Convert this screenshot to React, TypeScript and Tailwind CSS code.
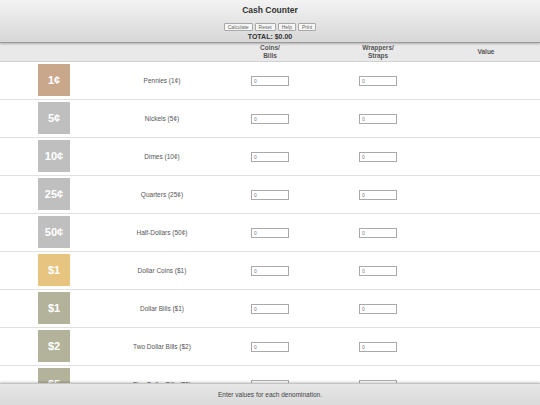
import { useState } from "react";

interface Denomination {
  badge: string;
  label: string;
  color: string;
}

const denominations: Denomination[] = [
  { badge: "1¢", label: "Pennies (1¢)", color: "bg-[#c9a78b]" },
  { badge: "5¢", label: "Nickels (5¢)", color: "bg-[#bfbfbf]" },
  { badge: "10¢", label: "Dimes (10¢)", color: "bg-[#bfbfbf]" },
  { badge: "25¢", label: "Quarters (25¢)", color: "bg-[#bfbfbf]" },
  { badge: "50¢", label: "Half-Dollars (50¢)", color: "bg-[#bfbfbf]" },
  { badge: "$1", label: "Dollar Coins ($1)", color: "bg-[#e7c47f]" },
  { badge: "$1", label: "Dollar Bills ($1)", color: "bg-[#b3b39b]" },
  { badge: "$2", label: "Two Dollar Bills ($2)", color: "bg-[#b3b39b]" },
  { badge: "$5", label: "Five Dollar Bills ($5)", color: "bg-[#b3b39b]" },
];

function SmallButton({ children }: { children: string }) {
  return (
    <button className="h-[8px] px-[3px] border border-[#a8a8a8] bg-[#f6f6f6] text-[5px] leading-[6px] text-[#666] rounded-[1px]">
      {children}
    </button>
  );
}

function CountInput() {
  const [value, setValue] = useState("0");
  return (
    <input
      value={value}
      onChange={(e) => setValue(e.target.value)}
      className="w-[38px] h-[10px] border border-[#aaaaaa] bg-white px-[2px] text-[5px] leading-[8px] text-[#777] outline-none"
    />
  );
}

export default function App() {
  return (
    <div className="h-screen w-full flex flex-col overflow-hidden bg-white font-['Liberation_Sans',Arial,sans-serif] text-[#444]">
      {/* Header */}
      <div className="relative z-10 h-[43px] shrink-0 flex flex-col items-center bg-gradient-to-b from-[#f3f3f3] to-[#d7d7d7] border-b border-[#9a9a9a] shadow-[0_1px_2px_rgba(0,0,0,0.25)]">
        <div className="mt-[5px] text-[8.5px] leading-[10px] font-bold text-[#333]">Cash Counter</div>
        <div className="mt-[8px] flex gap-[2px]">
          <SmallButton>Calculate</SmallButton>
          <SmallButton>Reset</SmallButton>
          <SmallButton>Help</SmallButton>
          <SmallButton>Print</SmallButton>
        </div>
        <div className="mt-[2px] text-[7px] leading-[8px] font-bold text-[#333]">TOTAL: $0.00</div>
      </div>

      {/* Column headings */}
      <div className="h-[19px] shrink-0 grid grid-cols-5 items-center bg-[#e9e9e9] border-b border-[#d2d2d2] text-[6.5px] leading-[8px] font-bold text-[#555] text-center">
        <div />
        <div />
        <div>
          Coins/
          <br />
          Bills
        </div>
        <div>
          Wrappers/
          <br />
          Straps
        </div>
        <div>Value</div>
      </div>

      {/* Rows */}
      <div className="flex-1 overflow-hidden">
        {denominations.map((d, i) => (
          <div key={i} className="h-[38px] grid grid-cols-5 border-b border-[#e0e0e0]">
            <div className="flex justify-center pt-[2px]">
              <div className={`w-[32px] h-[32px] ${d.color} flex items-center justify-center text-white font-bold text-[11px]`}>
                {d.badge}
              </div>
            </div>
            <div className="flex items-center justify-center text-[6.5px] text-[#555]">{d.label}</div>
            <div className="flex items-center justify-center">
              <CountInput />
            </div>
            <div className="flex items-center justify-center">
              <CountInput />
            </div>
            <div />
          </div>
        ))}
      </div>

      {/* Footer */}
      <div className="relative z-10 h-[22px] shrink-0 flex items-center justify-center bg-gradient-to-b from-[#e6e6e6] to-[#dadada] border-t border-[#c4c4c4] shadow-[0_-1px_2px_rgba(0,0,0,0.2)] text-[6.5px] text-[#444]">
        Enter values for each denomination.
      </div>
    </div>
  );
}
